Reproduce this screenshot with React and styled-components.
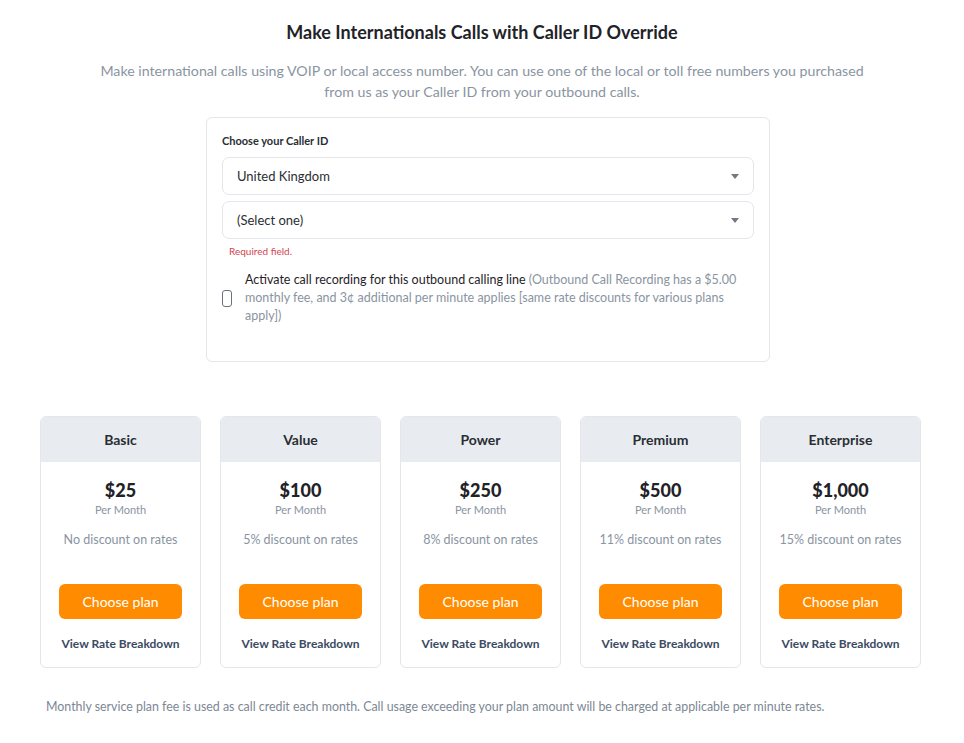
import { createGlobalStyle, styled } from "styled-components";

const GlobalStyle = createGlobalStyle`
  body {
    margin: 0;
    background: #fff;
    font-family: Lato, "Liberation Sans", sans-serif;
    color: #212529;
  }
`;

const Page = styled.main`
  padding: 21px 40px 30px 40px;
`;

const Title = styled.h1`
  margin: 0;
  text-align: center;
  font-size: 18px;
  line-height: 22px;
  font-weight: 700;
  color: #1f2328;
`;

const Lead = styled.p`
  margin: 17px auto 0;
  max-width: 790px;
  text-align: center;
  font-size: 14.2px;
  line-height: 21px;
  color: #8a94a1;
`;

const FormCard = styled.section`
  box-sizing: border-box;
  width: 564px;
  margin: 15px 0 0 calc(50% - 276px);
  padding: 16px 15px 36px 15px;
  border: 1px solid #e3e6ea;
  border-radius: 6px;
`;

const Label = styled.div`
  font-size: 11px;
  line-height: 14px;
  font-weight: 700;
  color: #2a2e33;
`;

const Select = styled.div`
  box-sizing: border-box;
  height: 38px;
  margin-top: ${(p) => p.$gap}px;
  padding: 0 14px;
  display: flex;
  align-items: center;
  justify-content: space-between;
  border: 1px solid #e3e6ea;
  border-radius: 7px;
  font-size: 13px;
  color: #2a2e33;
`;

const Caret = styled.span`
  width: 0;
  height: 0;
  border-left: 4.5px solid transparent;
  border-right: 4.5px solid transparent;
  border-top: 5px solid #727983;
`;

const ErrorText = styled.div`
  margin: 6px 0 0 7px;
  font-size: 10px;
  line-height: 13px;
  color: #d2454f;
`;

const CheckRow = styled.label`
  margin-top: 13px;
  display: flex;
  align-items: center;
  gap: 13px;
`;

const CheckBox = styled.span`
  flex: none;
  box-sizing: border-box;
  width: 10px;
  height: 17px;
  border: 1px solid #6c737c;
  border-radius: 3px;
`;

const CheckText = styled.span`
  font-size: 12.5px;
  line-height: 18px;
  color: #1f2328;
  padding-right: 2px;
`;

const Muted = styled.span`
  color: #8a94a1;
`;

const Plans = styled.div`
  margin-top: 54px;
  display: grid;
  grid-template-columns: repeat(5, 161px);
  column-gap: 19px;
`;

const PlanCard = styled.div`
  border: 1px solid #e3e6ea;
  border-radius: 6px;
  overflow: hidden;
  display: flex;
  flex-direction: column;
  align-items: center;
  padding-bottom: 16px;
`;

const PlanHead = styled.div`
  align-self: stretch;
  height: 45px;
  display: flex;
  align-items: center;
  justify-content: center;
  background: #e8ecf1;
  font-size: 14px;
  font-weight: 700;
  color: #2a2e33;
`;

const Price = styled.div`
  margin-top: 17px;
  font-size: 18px;
  line-height: 22px;
  font-weight: 900;
  color: #1f2328;
`;

const Per = styled.div`
  margin-top: 2px;
  font-size: 11px;
  line-height: 14px;
  color: #8a94a1;
`;

const Discount = styled.div`
  margin-top: 15px;
  font-size: 12.5px;
  line-height: 16px;
  color: #8a94a1;
`;

const ChooseButton = styled.button`
  margin-top: 36px;
  width: 123px;
  height: 35px;
  border: none;
  border-radius: 6px;
  background: #ff8c00;
  color: #fff;
  font-family: Lato, "Liberation Sans", sans-serif;
  font-size: 14px;
  cursor: pointer;
`;

const RateLink = styled.a`
  margin-top: 17px;
  font-size: 12px;
  line-height: 15px;
  font-weight: 700;
  color: #3a4a62;
  text-decoration: none;
`;

const Footnote = styled.p`
  margin: 31px 0 0 6px;
  font-size: 12.4px;
  line-height: 16px;
  color: #7d8794;
`;

const plans = [
  { name: "Basic", price: "$25", discount: "No discount on rates" },
  { name: "Value", price: "$100", discount: "5% discount on rates" },
  { name: "Power", price: "$250", discount: "8% discount on rates" },
  { name: "Premium", price: "$500", discount: "11% discount on rates" },
  { name: "Enterprise", price: "$1,000", discount: "15% discount on rates" },
];

export default function App() {
  return (
    <>
      <GlobalStyle />
      <Page>
        <Title>Make Internationals Calls with Caller ID Override</Title>
        <Lead>
          Make international calls using VOIP or local access number. You can use one of the local or toll
          free numbers you purchased from us as your Caller ID from your outbound calls.
        </Lead>

        <FormCard>
          <Label>Choose your Caller ID</Label>
          <Select $gap={9}>
            <span>United Kingdom</span>
            <Caret />
          </Select>
          <Select $gap={6}>
            <span>(Select one)</span>
            <Caret />
          </Select>
          <ErrorText>Required field.</ErrorText>
          <CheckRow>
            <CheckBox />
            <CheckText>
              Activate call recording for this outbound calling line{" "}
              <Muted>
                (Outbound Call Recording has a $5.00 monthly fee, and 3¢ additional per minute applies [same
                rate discounts for various plans apply])
              </Muted>
            </CheckText>
          </CheckRow>
        </FormCard>

        <Plans>
          {plans.map((p) => (
            <PlanCard key={p.name}>
              <PlanHead>{p.name}</PlanHead>
              <Price>{p.price}</Price>
              <Per>Per Month</Per>
              <Discount>{p.discount}</Discount>
              <ChooseButton>Choose plan</ChooseButton>
              <RateLink href="#">View Rate Breakdown</RateLink>
            </PlanCard>
          ))}
        </Plans>

        <Footnote>
          Monthly service plan fee is used as call credit each month. Call usage exceeding your plan amount
          will be charged at applicable per minute rates.
        </Footnote>
      </Page>
    </>
  );
}
